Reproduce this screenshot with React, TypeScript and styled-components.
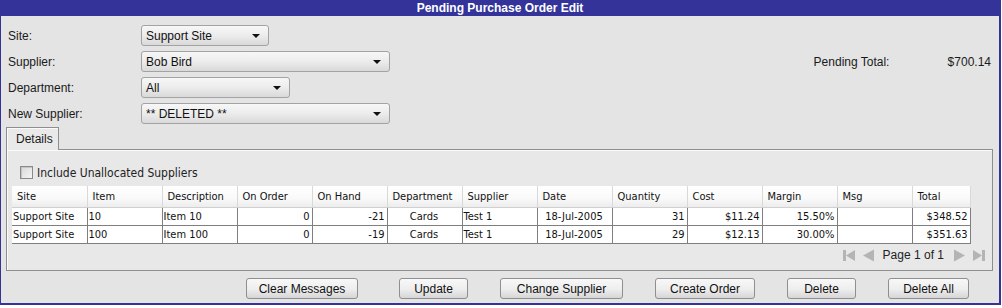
import React from "react";
import styled, { createGlobalStyle } from "styled-components";

const Global = createGlobalStyle`
  html, body { margin: 0; padding: 0; background: #ffffff; }
  * { box-sizing: border-box; }
`;

const Window = styled.div`
  width: 1001px;
  height: 305px;
  background: #e4e4e4;
  border-left: 1px solid #333399;
  border-right: 2px solid #333399;
  border-bottom: 2px solid #333399;
  font-family: "Liberation Sans", Arial, sans-serif;
  font-size: 12px;
  color: #1a1a1a;
  display: flex;
  flex-direction: column;
`;

const TitleBar = styled.div`
  height: 16px;
  line-height: 16px;
  background: #333399;
  color: #ffffff;
  font-weight: bold;
  font-size: 12px;
  text-align: center;
`;

const Form = styled.div`
  display: grid;
  grid-template-columns: 133px 250px 1fr 134px auto;
  grid-auto-rows: 21px;
  row-gap: 5px;
  padding: 9px 8px 0 7px;
  align-items: center;
`;

const Label = styled.div<{ $row: number; $col?: number }>`
  grid-row: ${(p) => p.$row};
  grid-column: ${(p) => p.$col ?? 1};
  font-size: 12px;
  color: #1a1a1a;
`;

const Value = styled(Label)`
  text-align: right;
`;

const Select = styled.div<{ $row: number; $w: number }>`
  grid-row: ${(p) => p.$row};
  grid-column: 2;
  width: ${(p) => p.$w}px;
  height: 21px;
  border: 1px solid #a3a3a3;
  border-radius: 3px;
  background: linear-gradient(#f7f7f7 0%, #ececec 50%, #d9d9d9 100%);
  display: flex;
  align-items: center;
  justify-content: space-between;
  padding: 0 8px 0 4px;
  font-size: 12px;
  color: #111;
`;

const Arrow = styled.span`
  width: 0;
  height: 0;
  border-left: 4px solid transparent;
  border-right: 4px solid transparent;
  border-top: 4px solid #111;
  margin-top: 1px;
`;

const TabArea = styled.div`
  margin: 3px 6px 0 5px;
  display: flex;
  flex-direction: column;
`;

const TabStrip = styled.div`
  display: flex;
`;

const Tab = styled.div`
  width: 53px;
  height: 23px;
  border: 1px solid #8e8e8e;
  border-bottom: none;
  background: #e9e9e9;
  padding: 4px 0 0 9px;
  font-size: 12px;
  margin-bottom: -1px;
  position: relative;
  z-index: 1;
  box-shadow: inset 1px 1px 0 #fafafa;
`;

const Panel = styled.div`
  height: 122px;
  border: 1px solid #8e8e8e;
  background: #e8e8e8;
  box-shadow: inset 1px 1px 0 #fafafa;
  padding: 16px 0 0 13px;
  display: flex;
  flex-direction: column;
`;

const CheckRow = styled.label`
  display: flex;
  align-items: center;
  gap: 4px;
  height: 13px;
  font-family: "DejaVu Sans Condensed", "DejaVu Sans", sans-serif;
  font-size: 12px;
  color: #222;
`;

const Box = styled.span`
  width: 13px;
  height: 13px;
  border: 1px solid #8a8a8a;
  background: linear-gradient(135deg, #d8d8d8, #f4f4f4);
  box-shadow: inset 1px 1px 0 #c4c4c4;
`;

const Grid = styled.table`
  margin: 7px 0 0 -8px;
  width: 958px;
  table-layout: fixed;
  border-collapse: collapse;
  font-family: "DejaVu Sans Condensed", "DejaVu Sans", sans-serif;
  font-size: 11px;
  color: #111;
`;

const Head = styled.th<{ $w: number }>`
  width: ${(p) => p.$w}px;
  height: 21px;
  padding: 0 0 0 5px;
  text-align: left;
  font-weight: normal;
  background: linear-gradient(#ffffff 0%, #f9f9f9 60%, #ececec 100%);
  border-right: 1px solid #d9d9d9;
  border-bottom: 1px solid #d0d0d0;
  white-space: nowrap;
  overflow: hidden;
`;

const Cell = styled.td<{ $align: "left" | "right" | "center" }>`
  height: 18px;
  padding: 0 2px 0 1px;
  text-align: ${(p) => p.$align};
  background: #ffffff;
  border-right: 1px solid #7f7f7f;
  border-bottom: 1px solid #7f7f7f;
  white-space: nowrap;
  overflow: hidden;
`;

const Pager = styled.div`
  display: flex;
  justify-content: flex-end;
  align-items: center;
  gap: 6px;
  margin: 4px 7px 0 0;
  height: 15px;
  font-size: 12px;
  color: #222;
`;

const PageText = styled.span`
  margin: 0 3px 0 2px;
`;

const Footer = styled.div`
  display: flex;
  justify-content: flex-end;
  gap: 32px;
  padding: 7px 30px 0 0;
`;

const Button = styled.div<{ $w: number; $extra?: number }>`
  width: ${(p) => p.$w}px;
  height: 21px;
  margin-right: ${(p) => p.$extra ?? 0}px;
  border: 1px solid #8f8f8f;
  border-radius: 3px;
  background: linear-gradient(#f8f8f8 0%, #ededed 55%, #d6d6d6 100%);
  display: flex;
  align-items: center;
  justify-content: center;
  font-size: 12px;
  color: #111;
`;

const NavIcon = ({ kind }: { kind: "first" | "prev" | "next" | "last" }) => {
  const c = "#b4b4b4";
  const flip = kind === "next" || kind === "last";
  const bar = kind === "first" || kind === "last";
  return (
    <svg width="13" height="13" viewBox="0 0 13 13" style={{ transform: flip ? "scaleX(-1)" : undefined }}>
      {bar && <rect x="0" y="1" width="3" height="11" fill={c} />}
      <polygon points={bar ? "3,6.5 12,1 12,12" : "1,6.5 12,0.5 12,12.5"} fill={c} />
    </svg>
  );
};

const cols: { name: string; w: number; align: "left" | "right" | "center" }[] = [
  { name: "Site", w: 75, align: "left" },
  { name: "Item", w: 75, align: "left" },
  { name: "Description", w: 75, align: "left" },
  { name: "On Order", w: 75, align: "right" },
  { name: "On Hand", w: 75, align: "right" },
  { name: "Department", w: 75, align: "center" },
  { name: "Supplier", w: 75, align: "left" },
  { name: "Date", w: 75, align: "center" },
  { name: "Quantity", w: 75, align: "right" },
  { name: "Cost", w: 75, align: "right" },
  { name: "Margin", w: 75, align: "right" },
  { name: "Msg", w: 75, align: "left" },
  { name: "Total", w: 58, align: "right" },
];

const rows = [
  ["Support Site", "10", "Item 10", "0", "-21", "Cards", "Test 1", "18-Jul-2005", "31", "$11.24", "15.50%", "", "$348.52"],
  ["Support Site", "100", "Item 100", "0", "-19", "Cards", "Test 1", "18-Jul-2005", "29", "$12.13", "30.00%", "", "$351.63"],
];

export default function App() {
  return (
    <>
      <Global />
      <Window>
        <TitleBar>Pending Purchase Order Edit</TitleBar>
        <Form>
          <Label $row={1}>Site:</Label>
          <Select $row={1} $w={128}>Support Site<Arrow /></Select>
          <Label $row={2}>Supplier:</Label>
          <Select $row={2} $w={249}>Bob Bird<Arrow /></Select>
          <Label $row={2} $col={4}>Pending Total:</Label>
          <Value $row={2} $col={5}>$700.14</Value>
          <Label $row={3}>Department:</Label>
          <Select $row={3} $w={149}>All<Arrow /></Select>
          <Label $row={4}>New Supplier:</Label>
          <Select $row={4} $w={249}>** DELETED **<Arrow /></Select>
        </Form>
        <TabArea>
          <TabStrip>
            <Tab>Details</Tab>
          </TabStrip>
          <Panel>
            <CheckRow>
              <Box />
              Include Unallocated Suppliers
            </CheckRow>
            <Grid>
              <thead>
                <tr>
                  {cols.map((c) => (
                    <Head key={c.name} $w={c.w}>{c.name}</Head>
                  ))}
                </tr>
              </thead>
              <tbody>
                {rows.map((r, i) => (
                  <tr key={i}>
                    {r.map((v, j) => (
                      <Cell key={j} $align={cols[j].align}>{v}</Cell>
                    ))}
                  </tr>
                ))}
              </tbody>
            </Grid>
            <Pager>
              <NavIcon kind="first" />
              <NavIcon kind="prev" />
              <PageText>Page 1 of 1</PageText>
              <NavIcon kind="next" />
              <NavIcon kind="last" />
            </Pager>
          </Panel>
        </TabArea>
        <Footer>
          <Button $w={112} $extra={9}>Clear Messages</Button>
          <Button $w={69}>Update</Button>
          <Button $w={123}>Change Supplier</Button>
          <Button $w={100}>Create Order</Button>
          <Button $w={69}>Delete</Button>
          <Button $w={81}>Delete All</Button>
        </Footer>
      </Window>
    </>
  );
}
